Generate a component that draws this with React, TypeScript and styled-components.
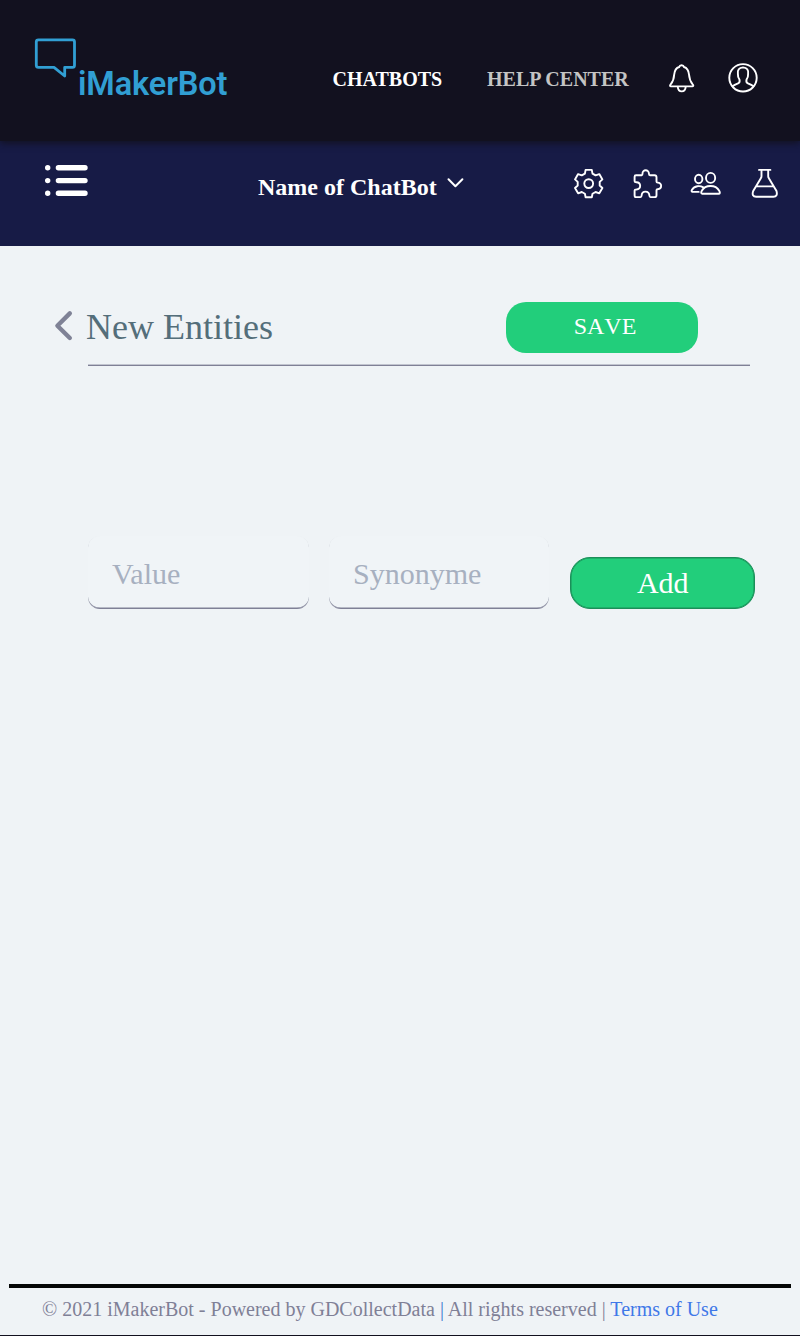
import React from "react";
import styled, { createGlobalStyle } from "styled-components";

const GlobalStyle = createGlobalStyle`
  *, *::before, *::after { box-sizing: border-box; }
  body {
    margin: 0;
    background: #eff3f6;
    font-family: "Liberation Serif", "Times New Roman", serif;
  }
`;

const Page = styled.div`
  display: flex;
  flex-direction: column;
  height: 1336px;
  border-bottom: 1px solid #12111f;
`;

const Header = styled.header`
  display: flex;
  align-items: flex-start;
  flex: none;
  height: 141px;
  padding: 38px 41px 0 34px;
  background: #12111f;
  box-shadow: 0 2px 7px #12111f;
  z-index: 1;
`;

const Logo = styled.a`
  display: flex;
  width: 298.5px;
  color: #319fd3;
`;

const LogoText = styled.span`
  margin: 27px 0 0 1px;
  font: 600 32.5px/38px Roboto, sans-serif;
  letter-spacing: -0.1px;
`;

const MenuLink = styled.a<{ $active?: boolean; $width: number }>`
  width: ${(p) => p.$width}px;
  margin-top: 31px;
  font-size: 20px;
  font-weight: bold;
  line-height: 20px;
  white-space: nowrap;
  color: ${(p) => (p.$active ? "#ffffff" : "#c4c4c4")};
`;

const HeaderIcons = styled.div`
  display: flex;
  gap: 30px;
  margin: 24px 0 0 auto;
`;

const Icon = styled.svg`
  display: block;
  flex: none;
  fill: none;
  stroke: currentColor;
  stroke-width: 1.9;
  stroke-linecap: round;
  stroke-linejoin: round;
`;

const WhiteIcon = styled(Icon)`
  color: #ffffff;
`;

const LogoIcon = styled(Icon)`
  stroke-width: 2.8;
`;

const ListIcon = styled(Icon)`
  stroke-width: 5.4;
`;

const ChevronIcon = styled(Icon)`
  stroke-width: 2;
`;

const BotBar = styled.nav`
  display: flex;
  align-items: flex-start;
  flex: none;
  height: 105px;
  padding: 23px 19px 0 44px;
  background: #171b46;
  color: #ffffff;
`;

const BotName = styled.button`
  display: flex;
  gap: 9px;
  margin: 11px 0 0 169px;
  padding: 0;
  border: 0;
  background: none;
  color: inherit;
  font: bold 24px/24px "Liberation Serif", serif;
`;

const Tools = styled.div`
  display: flex;
  gap: 26.67px;
  margin: 4px 0 0 auto;
`;

const Main = styled.main`
  flex: 1;
  padding: 56px 45px 0 54px;
`;

const TitleRow = styled.div`
  display: flex;
  height: 62px;
`;

const BackIcon = styled(Icon)`
  margin-top: 8px;
  color: #7f8296;
  stroke-width: 4.4;
`;

const Title = styled.h1`
  width: 419.5px;
  margin: 5px 0 0 12px;
  font-size: 36px;
  font-weight: normal;
  line-height: 40px;
  color: #546e7a;
`;

const SaveButton = styled.button`
  width: 192px;
  height: 51px;
  padding: 0 0 3px 7px;
  border: 0;
  border-radius: 20px;
  background: #22ce7b;
  color: #ffffff;
  font: 24px/24px "Liberation Serif", serif;
  font-kerning: none;
`;

const Divider = styled.hr`
  height: 2px;
  margin: 0 0 0 34px;
  width: 662px;
  border: 0;
  background: linear-gradient(#c1c4cf 50%, #7f8096 50%);
`;

const EntryRow = styled.form`
  display: flex;
  align-items: flex-end;
  gap: 20px;
  margin: 170px 0 0 34px;
`;

const Field = styled.input<{ $width: number }>`
  width: ${(p) => p.$width}px;
  height: 73px;
  padding: 4px 24px 0;
  border: 0 solid transparent;
  border-bottom: 1px solid #7f8096;
  box-shadow: inset 0 -0.5px 0 #7f8096;
  border-radius: 12px;
  background: #f0f4f7;
  font: 30px/36px "Liberation Serif", serif;
  color: #546e7a;
  &::placeholder { color: #a7b0c0; opacity: 1; }
`;

const AddButton = styled.button`
  width: 186px;
  height: 52.5px;
  margin-left: 0.5px;
  padding: 0 0 0 1px;
  border: 1px solid #1b8f59;
  box-shadow: inset 0 0 0 0.5px #1b8f59;
  border-radius: 20px;
  background: #22ce7b;
  color: #ffffff;
  font: 30px/34px "Liberation Serif", serif;
`;

const Footer = styled.footer`
  height: 51px;
  margin: 0 9px;
  padding: 10px 0 0 33px;
  border-top: 4px solid #050706;
  font-size: 20px;
  line-height: 22px;
  white-space: nowrap;
  color: #7f8096;
`;

const Separator = styled.span<{ $blue?: boolean }>`
  color: ${(p) => (p.$blue ? "#3e7fd0" : "#7f8096")};
`;

const TermsLink = styled.a`
  color: #3f78e8;
`;

export default function App() {
  return (
    <>
      <GlobalStyle />
      <Page>
        <Header>
          <Logo>
            <LogoIcon width="43" height="42" viewBox="34 38 43 42">
              <path d="M38.5 39.8H72.5Q74.5 39.8 74.5 41.8V65.2Q74.5 67.3 72.5 67.3H64.7V76L54 67.3H38.5Q36.3 67.3 36.3 65.2V41.8Q36.3 39.8 38.5 39.8Z" />
            </LogoIcon>
            <LogoText>iMakerBot</LogoText>
          </Logo>
          <MenuLink $active $width={154.5}>CHATBOTS</MenuLink>
          <MenuLink $width={142}>HELP CENTER</MenuLink>
          <HeaderIcons>
            <WhiteIcon width="30" height="32" viewBox="667 62 30 32">
              <path d="M681.6 65.2Q679.6 65.2 679.2 67Q674.8 68.4 674.2 74.5Q673.8 80.5 670.8 84.2Q669.2 86.2 670.8 86.4H692.4Q694.2 86.2 692.5 84.2Q689.5 80.5 689 74.5Q688.4 68.4 684 67Q683.6 65.2 681.6 65.2ZM677.8 87C678.2 92.8 685.2 92.8 685.7 87" />
            </WhiteIcon>
            <WhiteIcon width="32" height="32" viewBox="727 62 32 32">
              <circle cx="743" cy="77.8" r="13.7" />
              <path d="M732.5 86.2Q734.2 84.9 738.1 83.3Q740.2 82.4 739.5 79.7Q737.7 77.4 737.9 74Q737 67.8 743 67.4Q749 67.8 748.1 74Q748.3 77.4 746.5 79.7Q745.8 82.4 747.9 83.3Q751.8 84.9 753.5 86.2" />
            </WhiteIcon>
          </HeaderIcons>
        </Header>
        <BotBar>
          <ListIcon width="45" height="34" viewBox="44 164 45 34">
            <path d="M47.7 167.7h.01M47.7 180.6h.01M47.7 193.3h.01M58.4 167.7H85M58.4 180.6H85M58.4 193.3H85" />
          </ListIcon>
          <BotName>
            <span>Name of ChatBot</span>
            <ChevronIcon width="20" height="16" viewBox="446 175 20 16">
              <path d="M448.5 179.3L455.4 186.2L462.4 179.3" />
            </ChevronIcon>
          </BotName>
          <Tools>
            <Icon width="32" height="32" viewBox="573 168 32 32">
              <path d="M585.6 169.9H591.8L592.5 173.6L595.6 175.4L599.3 174.1L602.4 179.4L599.7 181.9V185.5L602.4 188L599.3 193.3L595.6 192L592.5 193.8L591.8 197.3H585.6L584.9 193.8L581.8 192L578.1 193.3L575 188L577.7 185.5V181.9L575 179.4L578.1 174.1L581.8 175.4L584.9 173.6Z" />
              <circle cx="588.7" cy="183.6" r="4.4" />
            </Icon>
            <Icon width="32" height="32" viewBox="632 168 32 32">
              <path d="M636 175.2H641.6Q642.6 175 642.5 173.6C642.3 169.2 649 169.2 648.9 173.6Q648.9 175.2 650 175.2H654.5Q656.5 175.2 656.5 177.2V181.6Q656.5 182.6 657.6 182.6C662.3 182.5 662.3 189.2 657.6 189.2Q656.5 189.2 656.5 190.3V195.2Q656.5 197.1 654.5 197.1H650.5Q649.5 197.1 649.4 195.5C649 190.3 641.9 190.3 641.6 195.5Q641.5 197.1 640.5 197.1H636Q634.6 197.1 634.6 195.2V190.5Q634.6 189.5 636.4 189.5C641.4 189.2 641.4 182.4 636.4 182.2Q634.6 182.2 634.6 181.2V176.7Q634.6 175.2 636 175.2Z" />
            </Icon>
            <Icon width="32" height="32" viewBox="690 168 32 32">
              <ellipse cx="710.6" cy="177.9" rx="4.6" ry="5" />
              <ellipse cx="698.7" cy="179" rx="3.7" ry="4.2" />
              <path d="M702.3 193.8H718.8Q720.7 193.2 719.2 190.8C715.8 184.4 705.2 184.4 701.8 190.8Q700.4 193.3 702.3 193.8ZM698.7 191.9H692.4Q691 191.5 692 189.8C694.5 185.5 700 185.3 703.3 187.4" />
            </Icon>
            <Icon width="32" height="32" viewBox="749 168 32 32">
              <path d="M759 169.9H770.4M761.5 170V176.2Q761.5 177.3 760.7 178.4L753.2 191Q751.3 196.7 756.2 196.7H773.4Q778 196.7 776.5 191L769 178.4Q768.2 177.3 768.2 176.2V170M756.3 186.4H773.4" />
            </Icon>
          </Tools>
        </BotBar>
        <Main>
          <TitleRow>
            <BackIcon width="20" height="32" viewBox="54 310 20 32">
              <path d="M69.8 313.4L57.4 325.8L69.8 338" />
            </BackIcon>
            <Title>New Entities</Title>
            <SaveButton>SAVE</SaveButton>
          </TitleRow>
          <Divider />
          <EntryRow>
            <Field $width={221} placeholder="Value" />
            <Field $width={220} placeholder="Synonyme" />
            <AddButton type="button">Add</AddButton>
          </EntryRow>
        </Main>
        <Footer>
          © 2021 iMakerBot - Powered by GDCollectData <Separator $blue>|</Separator> All rights
          reserved <Separator>|</Separator> <TermsLink>Terms of Use</TermsLink>
        </Footer>
      </Page>
    </>
  );
}
